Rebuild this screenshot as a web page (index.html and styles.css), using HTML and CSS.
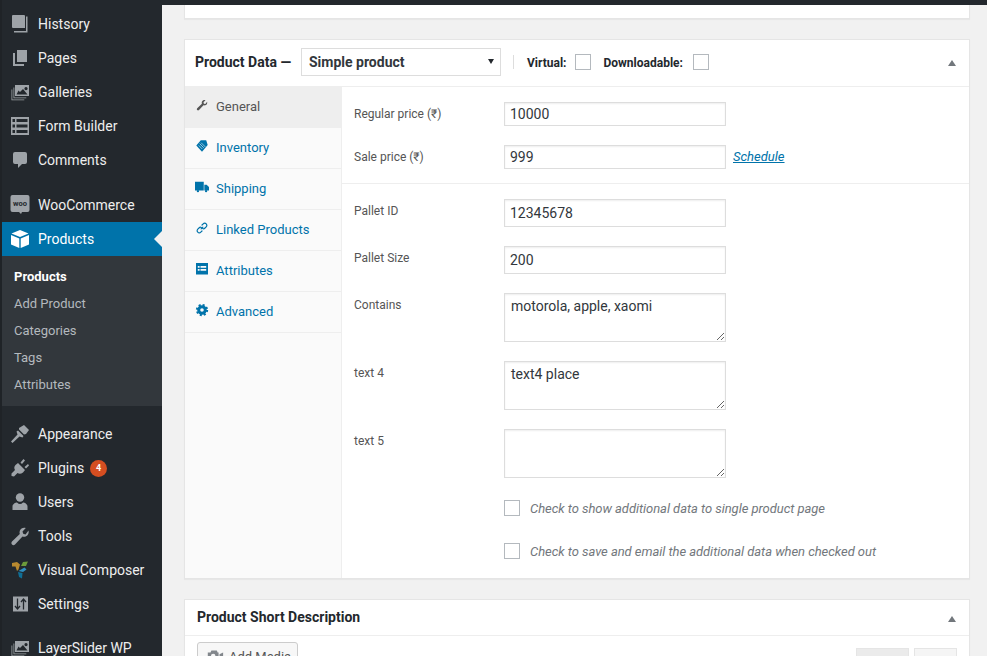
FILE: index.html
```html
<!DOCTYPE html>
<html lang="en">
<head>
<meta charset="utf-8">
<title>Edit Product</title>
<link rel="stylesheet" href="styles.css">
</head>
<body>
<div class="app">
  <nav class="sidebar">
    <ul class="menu">
      <li class="item"><svg class="ico" viewBox="0 0 20 20"><path d="M3 5a1 1 0 0 1 1-1h11a1 1 0 0 1 1 1v12H4a1 1 0 0 1-1-1z" transform="translate(-1 -3)"/><path d="M16 2.500h1.500V18.500H4V17h12z"/></svg><span>Histsory</span></li>
      <li class="item"><svg class="ico" viewBox="0 0 20 20"><path d="M7 2h10v12H7z"/><path d="M5 5v11h9v2H3V5z"/></svg><span>Pages</span></li>
      <li class="item"><svg class="ico" viewBox="0 0 20 20"><path fill-rule="evenodd" d="M5 3h14v11H5zM6.500 12.500h11L13 7l-3 3-1.500-1.500zM16 5a1.600 1.600 0 1 0 .01 0z"/><path d="M3.500 5.500h.8v10h12v.8H3.500zM1.500 7.500h.8v10h12v.8H1.500z"/></svg><span>Galleries</span></li>
      <li class="item"><svg class="ico" viewBox="0 0 20 20"><path fill-rule="evenodd" d="M1 1h18v18H1zM2.500 3v3h2.500V3zM6.500 3v3H17.500V3zM2.500 8.500v3h2.500v-3zM6.500 8.500v3H17.500v-3zM2.500 14v3h2.500v-3zM6.500 14v3H17.500v-3z"/></svg><span>Form Builder</span></li>
      <li class="item"><svg class="ico" viewBox="0 0 20 20"><path d="M5 2h10a2 2 0 0 1 2 2v8a2 2 0 0 1-2 2h-3l-4 4v-4H5a2 2 0 0 1-2-2V4a2 2 0 0 1 2-2z"/></svg><span>Comments</span></li>
      <li class="item sep"><svg class="ico" viewBox="0 0 20 20"><path d="M2.500 0h15a2 2 0 0 1 2 2v13a2 2 0 0 1-2 2H12l-1 2-2-2H2.500a2 2 0 0 1-2-2V2a2 2 0 0 1 2-2z"/><text class="woo" x="10" y="11" text-anchor="middle">woo</text></svg><span>WooCommerce</span></li>
      <li class="item current"><svg class="ico" viewBox="0 0 20 20"><path d="M10 1l8.500 3.500L10 8 1.500 4.500z"/><path d="M1 6l8.300 3.500V19L1 15.500z"/><path d="M19 6l-8.300 3.500V19l8.300-3.500z"/></svg><span>Products</span></li>
    </ul>
    <ul class="submenu">
      <li class="sub strong">Products</li>
      <li class="sub">Add Product</li>
      <li class="sub">Categories</li>
      <li class="sub">Tags</li>
      <li class="sub">Attributes</li>
    </ul>
    <ul class="menu">
      <li class="item sep"><svg class="ico" viewBox="0 0 20 20"><path d="M9 4l5-3 5 5-3 4-2 .5-5-5z"/><path d="M8 6.500l5.500 5.500-1 1.500-3-1L2.500 19 1 17.500l6.500-7-1-3z"/></svg><span>Appearance</span></li>
      <li class="item"><svg class="ico" viewBox="0 0 20 20"><path d="M8 5l7 7-2 2.500c-2 1.500-4 1.500-5.500.5L4 18.500 1.500 18v-2.500L5 12c-1-1.500-1-3.500.5-5z"/><path d="M10.500 4.500L13.500 1l1.500 1.500-3 3.500zM14.500 9l3.500-3 1 1.500-3 3z"/></svg><span>Plugins</span><b class="badge">4</b></li>
      <li class="item"><svg class="ico" viewBox="0 0 20 20"><circle cx="10" cy="5.500" r="4.200"/><path d="M2.500 18v-3.500c0-2.500 3-4 4.500-4 1 1 2 1.500 3 1.500s2-.5 3-1.500c1.500 0 4.500 1.500 4.500 4V18z"/></svg><span>Users</span></li>
      <li class="item"><svg class="ico" viewBox="0 0 20 20"><path d="M18.500 4.500c.7 2.500-.3 5-2.800 6-1.200.4-2.300.3-3.200 0L5 18.500c-1 1-2.200.9-3 0-.8-.8-.8-2 0-3l7.800-7.500c-.4-1-.4-2.200 0-3.300 1-2.500 3.500-3.500 6-2.700L12.500 5.500l.7 2.300 2.300.7z"/></svg><span>Tools</span></li>
      <li class="item"><svg class="ico" viewBox="0 0 20 20"><path class="vc-a" d="M2 3l5-1 3 2.500-1.500 5-1.500 1.500-1.500-4.500L2 6.500z"/><path class="vc-b" d="M11 6l2-4 5-.5-2 4.500z"/><path class="vc-c" d="M8.500 11l6-3.500 2 2-3.500 2.500z"/><path class="vc-d" d="M8 12l4.500 1-.5 5.500-3-1.500z"/></svg><span>Visual Composer</span></li>
      <li class="item"><svg class="ico" viewBox="0 0 20 20"><path d="M3 2.500h15v15H3z"/><path class="arrows" d="M7.500 4.500v11M5 12l2.500 3 2.500-3M13.500 15.500v-11M11 8l2.500-3 2.500 3"/></svg><span>Settings</span></li>
      <li class="item sep-s"><svg class="ico" viewBox="0 0 20 20"><path fill-rule="evenodd" d="M5 3h14v11H5zM6.500 12.500h11L13 7l-3 3-1.500-1.500zM16 5a1.600 1.600 0 1 0 .01 0z"/><path d="M3.500 5.500h.8v10h12v.8H3.500zM1.500 7.500h.8v10h12v.8H1.500z"/></svg><span>LayerSlider WP</span></li>
    </ul>
  </nav>

  <div class="content">
    <div class="topbar"></div>
    <main class="main">
      <section class="card stub"></section>

      <section class="card">
        <header class="pd-head">
          <strong class="pd-title">Product Data —</strong>
          <span class="select-wrap"><select class="pd-select"><option>Simple product</option></select></span>
          <span class="vline"></span>
          <label class="pd-check"><span>Virtual:</span> <input type="checkbox" class="cb"></label>
          <label class="pd-check wide-gap"><span>Downloadable:</span> <input type="checkbox" class="cb"></label>
          <span class="collapse"></span>
        </header>
        <div class="pd-body">
          <ul class="tabs">
            <li class="tab active"><svg class="tab-ico" viewBox="0 0 20 20"><path d="M18.500 4.500c.7 2.500-.3 5-2.800 6-1.200.4-2.300.3-3.200 0L5 18.500c-1 1-2.200.9-3 0-.8-.8-.8-2 0-3l7.800-7.500c-.4-1-.4-2.200 0-3.300 1-2.500 3.500-3.500 6-2.700L12.500 5.500l.7 2.300 2.300.7z"/></svg>General</li>
            <li class="tab"><svg class="tab-ico" viewBox="0 0 20 20"><path d="M8 .5h9l2.500 8L10 19.500.5 9z"/><path class="tag-lines" d="M6 6l7 7M8.500 4.500l7 7M4.500 9l6 6"/></svg>Inventory</li>
            <li class="tab"><svg class="tab-ico wide" viewBox="0 0 24 20"><path d="M0 1h15v15H0zM16 6h4l4 4v6h-8z"/><circle cx="5" cy="17" r="2"/><circle cx="19" cy="17" r="2"/></svg>Shipping</li>
            <li class="tab"><svg class="tab-ico" viewBox="0 0 20 20"><path class="link-s" d="M8.500 11.500l3-3M10 5l2-2c1.500-1.500 3.500-1.500 5 0s1.500 3.500 0 5l-2 2c-1.500 1.500-3 1.500-4 .5M10 15l-2 2c-1.500 1.500-3.500 1.500-5 0s-1.500-3.500 0-5l2-2c1.500-1.500 3-1.500 4-.5"/></svg>Linked Products</li>
            <li class="tab"><svg class="tab-ico" viewBox="0 0 20 20"><path fill-rule="evenodd" d="M0 0h20v19H0zM3 5v3h3V5zM7.500 5v3H17V5zM3 10v3h3v-3zM7.500 10v3H17v-3z"/></svg>Attributes</li>
            <li class="tab"><svg class="tab-ico" viewBox="0 0 20 20"><circle class="gear-ring" cx="10" cy="10" r="5.500"/><circle class="gear-teeth" cx="10" cy="10" r="8.500"/></svg>Advanced</li>
          </ul>
          <div class="panel">
            <div class="group">
              <div class="row"><label class="lbl">Regular price (₹)</label><input class="field short" type="text" value="10000"></div>
              <div class="row"><label class="lbl">Sale price (₹)</label><input class="field short" type="text" value="999"><a class="schedule">Schedule</a></div>
            </div>
            <div class="group last">
              <div class="row"><label class="lbl">Pallet ID</label><input class="field" type="text" value="12345678"></div>
              <div class="row"><label class="lbl">Pallet Size</label><input class="field" type="text" value="200"></div>
              <div class="row"><label class="lbl">Contains</label><textarea class="field area">motorola, apple, xaomi</textarea></div>
              <div class="row"><label class="lbl">text 4</label><textarea class="field area">text4 place</textarea></div>
              <div class="row"><label class="lbl">text 5</label><textarea class="field area"></textarea></div>
              <div class="check-row first"><input type="checkbox" class="cb"><em>Check to show additional data to single product page</em></div>
              <div class="check-row"><input type="checkbox" class="cb"><em>Check to save and email the additional data when checked out</em></div>
            </div>
          </div>
        </div>
      </section>

      <section class="card">
        <header class="sd-head"><strong class="sd-title">Product Short Description</strong><span class="collapse"></span></header>
        <div class="sd-tools">
          <button class="media" type="button"><svg class="media-ico" viewBox="0 0 20 20"><path d="M2 6h3l1-2h6l1 2h1v9H2z"/><circle class="lens" cx="8" cy="10" r="2.500"/><path d="M15 8l4-2v8l-4-2z"/></svg>Add Media</button>
          <span class="ed-tab on"></span>
          <span class="ed-tab"></span>
        </div>
      </section>
    </main>
  </div>
</div>
</body>
</html>
```
FILE: styles.css
```css
* { box-sizing: border-box; }
html, body { margin: 0; height: 100%; overflow: hidden; }
body { background: #f1f1f1; font-family: Roboto, "Liberation Sans", sans-serif; color: #444; }
ul { list-style: none; margin: 0; padding: 0; }

.app { display: flex; height: 656px; overflow: hidden; }

/* sidebar */
.sidebar { width: 162px; flex: none; background: #23282d; border-left: 2px solid #1f2327; padding-top: 7px; overflow: hidden; }
.item { height: 34px; display: flex; align-items: center; padding-left: 8px; color: #eee; font-size: 14px; position: relative; }
.item > span { margin-left: 8px; }
.sep { margin-top: 11px; }
.sep-s { margin-top: 10px; }
.ico { width: 20px; height: 20px; flex: none; fill: #9ea3a8; }
.woo { font: 700 7.500px Roboto, sans-serif; fill: #23282d; }
.arrows { fill: none; stroke: #23282d; stroke-width: 1.300; }
.current { background: #0073aa; color: #fff; }
.current .ico { fill: #fff; }
.current::after { content: ""; position: absolute; right: 0; top: 9px; border: 8px solid transparent; border-right-color: #f1f1f1; border-left-width: 0; }
.submenu { background: #32373c; height: 150px; padding-top: 7px; }
.sub { height: 27px; line-height: 27px; padding-left: 12px; font-size: 13px; color: #b4b9be; }
.strong { color: #fff; font-weight: 700; }
.item > .badge { margin-left: 6px; width: 17px; height: 17px; border-radius: 50%; background: #d54e21; color: #fff; font-size: 9px; font-weight: 700; line-height: 17px; text-align: center; }
.vc-a { fill: #b8892f; } .vc-b { fill: #6d9a3a; } .vc-c { fill: #2f8fc0; } .vc-d { fill: #0f6f96; }

/* content */
.content { flex: 1; min-width: 0; }
.topbar { height: 5px; background: #23282d; }
.main { padding: 0 17px 0 22px; display: flex; flex-direction: column; gap: 20px; }
.card { background: #fff; border: 1px solid #e5e5e5; box-shadow: 0 1px 1px rgba(0,0,0,.04); flex: none; }
.stub { height: 14px; border-top: 0; }

.pd-head { height: 47px; display: flex; align-items: center; padding: 0 13px 2px 10px; border-bottom: 1px solid #eee; }
.pd-title { font-size: 14px; font-weight: 700; color: #23282d; width: 106px; flex: none; }
.select-wrap { position: relative; display: block; width: 200px; height: 28px; flex: none; }
.select-wrap::after { content: ""; position: absolute; right: 7px; top: 11px; border: 3px solid transparent; border-bottom: 0; border-top: 5px solid #23282d; }
.pd-select { appearance: none; display: block; width: 200px; height: 28px; margin: 0; border: 1px solid #ddd; background: #fff; font: 700 14px Roboto, sans-serif; color: #32373c; padding: 0 7px; border-radius: 0; outline: 0; }
.vline { width: 1px; height: 14px; background: #ddd; margin: 0 13px 0 12px; flex: none; }
.pd-check { display: flex; align-items: center; font-size: 12px; font-weight: 700; color: #23282d; margin-right: 12px; gap: 9px; }
.pd-check > span { margin-top: 2px; }
.pd-check.wide-gap { gap: 10px; }
.cb { appearance: none; width: 16px; height: 16px; margin: 0; flex: none; background: #fff; border: 1px solid #b4b9be; border-radius: 0; }
.collapse { margin-left: auto; margin-top: 2px; width: 0; height: 0; border: 4.500px solid transparent; border-top: 0; border-bottom: 6px solid #72777c; }

.pd-body { display: flex; }
.tabs { width: 157px; flex: none; background: #fafafa; border-right: 1px solid #eee; }
.tab { height: 41px; display: flex; align-items: center; padding-left: 11px; padding-bottom: 1px; font-size: 13px; color: #0073aa; border-bottom: 1px solid #eee; }
.tab.active { background: #eee; color: #555; border-bottom-color: #eee; }
.tab-ico { width: 12px; height: 12px; flex: none; fill: #0073aa; margin: -4px 8px 0 0; overflow: visible; }
.tab-ico.wide { width: 14px; margin: -4px 7px 0 -1px; }
.active .tab-ico { fill: #555; }
.tag-lines { fill: none; stroke: #fafafa; stroke-width: 1; }
.link-s { fill: none; stroke: #0073aa; stroke-width: 2; stroke-linecap: round; }
.gear-ring { fill: none; stroke: #0073aa; stroke-width: 5; }
.gear-teeth { fill: none; stroke: #0073aa; stroke-width: 3.500; stroke-dasharray: 3.340 3.340; }

.panel { flex: 1; min-width: 0; }
.group { padding: 15px 12px 14px; border-bottom: 1px solid #eee; display: flex; flex-direction: column; gap: 19px; }
.group.last { border-bottom: 0; padding-bottom: 19px; }
.row { display: flex; align-items: flex-start; }
.lbl { width: 150px; flex: none; font-size: 12px; line-height: 16px; padding-top: 4px; color: #555; }
.field { width: 222px; height: 28px; margin: 0; border: 1px solid #ddd; background: #fff; box-shadow: inset 0 1px 2px rgba(0,0,0,.07); font: 14px Roboto, sans-serif; color: #32373c; padding: 0 5px; border-radius: 0; outline: 0; }
.short { height: 24px; }
.area { height: 49px; padding: 3px 6px 5px; line-height: 19px; resize: vertical; display: block; }
.schedule { margin: 4px 0 0 7px; font-size: 13px; font-style: italic; line-height: 16px; color: #0073aa; text-decoration: underline; }
.check-row { display: flex; align-items: center; height: 16px; padding-left: 150px; margin-top: 8px; font-size: 13px; color: #72777c; gap: 10px; letter-spacing: -.05px; }
.check-row.first { margin-top: 3px; }

.sd-head { height: 36px; display: flex; align-items: center; padding: 0 13px 2px 12px; border-bottom: 1px solid #eee; }
.sd-head .collapse { margin-top: 5px; }
.sd-title { font-size: 14px; font-weight: 700; color: #23282d; }
.sd-tools { height: 60px; display: flex; align-items: flex-start; padding: 6px 12px 0; }
.media { height: 28px; width: 101px; display: flex; align-items: center; gap: 4px; padding: 0 7px; border: 1px solid #ccc; border-radius: 3px; background: #f7f7f7; font: 13px Roboto, sans-serif; color: #555; white-space: nowrap; }
.media-ico { width: 20px; height: 18px; fill: #82878c; flex: none; }
.lens { fill: #f7f7f7; }
.ed-tab { width: 43px; height: 28px; margin: 6px 0 0 5px; background: #f5f5f5; border: 1px solid #e5e5e5; }
.ed-tab.on { width: 53px; margin-left: auto; background: #ebebeb; }
```
